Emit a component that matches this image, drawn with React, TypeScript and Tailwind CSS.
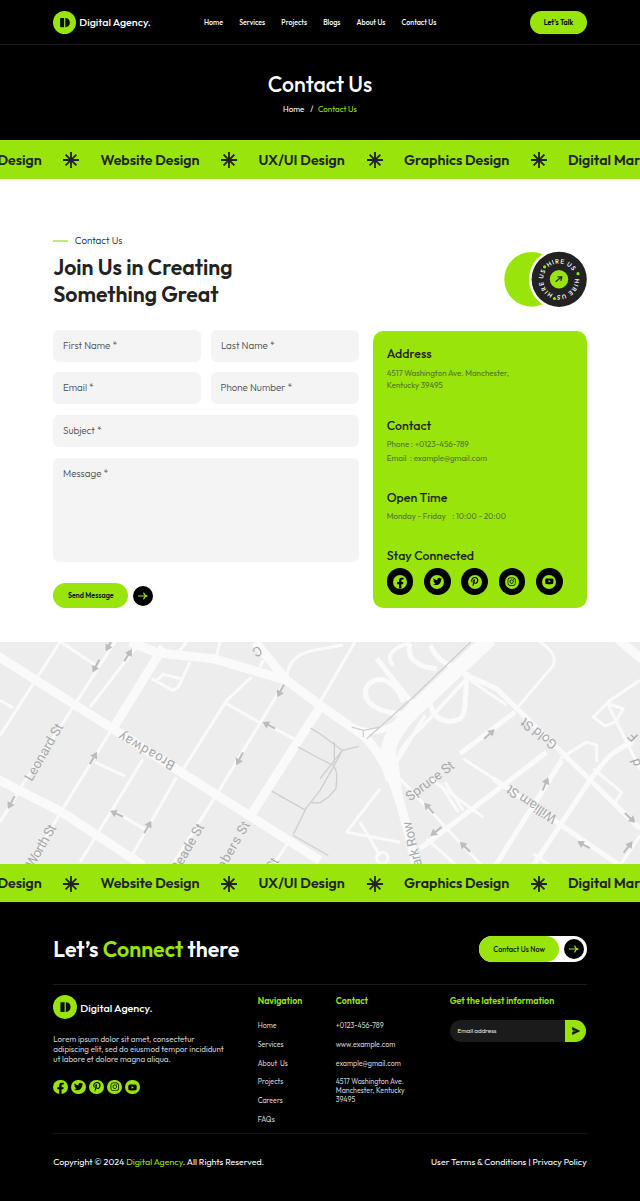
import type { ReactNode } from "react";
import { FaFacebookF, FaInstagram, FaPinterestP, FaTwitter, FaYoutube } from "react-icons/fa";

const navLinks = ["Home", "Services", "Projects", "Blogs", "About Us", "Contact Us"];

const socials: { name: string; icon: ReactNode }[] = [
  { name: "Facebook", icon: <FaFacebookF className="h-[84%] w-[84%] translate-x-[4%] translate-y-[13%]" /> },
  { name: "Twitter", icon: <FaTwitter className="h-[64%] w-[64%]" /> },
  { name: "Pinterest", icon: <FaPinterestP className="h-[68%] w-[68%]" /> },
  { name: "Instagram", icon: <FaInstagram className="h-[66%] w-[66%]" /> },
  { name: "YouTube", icon: <FaYoutube className="h-[62%] w-[62%]" /> },
];

function Logo({ size, text }: { size: string; text: string }) {
  return (
    <div className="flex items-center">
      <svg viewBox="0 0 24 24" className={size}>
        <circle cx="12" cy="12" r="12" fill="#99e40a" />
        <path d="M8 7.2H11.6V16.9H8Q7.4 16.9 7.4 16.3V7.8Q7.4 7.2 8 7.2ZM12.8 7.2C15.8 7.2 17.6 9 17.6 12.05C17.6 15.1 15.8 16.9 12.8 16.9Z" fill="#0b0f02" />
      </svg>
      <span className={text}>Digital Agency.</span>
    </div>
  );
}

function Star() {
  return (
    <svg viewBox="-8 -8 16 16" className="h-4 w-4 shrink-0" stroke="#222" strokeWidth="1.8">
      <path d="M0-8V8M-8 0H8M-5.4-5.4L5.4 5.4M5.4-5.4L-5.4 5.4" />
    </svg>
  );
}

function Marquee({ className }: { className: string }) {
  return (
    <div className={`flex items-center overflow-hidden bg-[#99e40a] text-[14.2px] font-semibold whitespace-nowrap text-[#222] ${className}`}>
      <div className="-ml-[2.5px] flex shrink-0 items-center">
        <span className="w-[65.5px]">Design</span>
        <Star />
        <span className="ml-[21.5px] w-[120.5px]">Website Design</span>
        <Star />
        <span className="ml-[21.5px] w-[108px]">UX/UI Design</span>
        <Star />
        <span className="ml-[21.5px] w-[126.5px]">Graphics Design</span>
        <Star />
        <span className="ml-[21.5px]">Digital Marketing</span>
      </div>
    </div>
  );
}

function Arrow({ className }: { className: string }) {
  return (
    <span className={`flex h-5 w-5 items-center justify-center rounded-full bg-black ${className}`}>
      <svg viewBox="0 0 10 10" className="h-2.5 w-2.5" fill="none" stroke="#99e40a" strokeWidth="1.2">
        <path d="M0 5H9M5.6 1.6C6 3.5 7.2 4.8 9.6 5C7.2 5.2 6 6.5 5.6 8.4" />
      </svg>
    </span>
  );
}

function HireBadge() {
  return (
    <svg viewBox="504 250 84 60" className="h-[60px] w-[84px]">
      <defs>
        <path id="ring" d="M559 295.2A15.9 15.9 0 1 1 559.01 295.2" />
      </defs>
      <circle cx="531.7" cy="279.3" r="27.4" fill="#99e40a" />
      <circle cx="559" cy="279.3" r="30" fill="#fff" />
      <circle cx="559.2" cy="279.3" r="27.6" fill="#222" />
      <circle cx="559" cy="279.3" r="9.2" fill="#99e40a" />
      <g fill="#fff" fontSize="6.3" fontWeight="500" letterSpacing="0.8">
        <text transform="rotate(-43 559 279.3)">
          <textPath href="#ring" startOffset="49.95">HIRE US</textPath>
        </text>
        <text transform="rotate(86 559 279.3)">
          <textPath href="#ring" startOffset="49.95">HIRE US</textPath>
        </text>
        <text transform="rotate(201 559 279.3)">
          <textPath href="#ring" startOffset="49.95">HIRE US</textPath>
        </text>
      </g>
      <g fill="#99e40a">
        <circle cx="544.6" cy="266.8" r="1.6" />
        <circle cx="578" cy="273.7" r="1.6" />
        <circle cx="554.5" cy="298.5" r="1.6" />
      </g>
      <path d="M555.6 281.8L561.6 276.9M557.4 276.8H561.8L560.8 280.8" fill="none" stroke="#222" strokeWidth="1.2" />
    </svg>
  );
}

function MapArrow({ x, y, r }: { x: number; y: number; r: number }) {
  return (
    <g transform={`translate(${x} ${y}) rotate(${r})`}>
      <path d="M-21 0H6" stroke="#bcbcbc" strokeWidth="6" fill="none" />
      <path d="M2-12L22 0L2 12Z" fill="#bcbcbc" />
    </g>
  );
}

const arrows: [number, number, number][] = [
  [328, 28, 118], [288, 92, 118], [384, 60, -58], [34, 501, 118], [280, 368, -60],
  [350, 535, 205], [443, 575, -60], [842, 166, 118], [719, 370, 118], [807, 270, 208],
  [1468, 296, -42], [1287, 518, -132], [1308, 588, 142], [1395, 634, -136],
  [1636, 446, -66], [1751, 628, 208], [1890, 547, 42], [1884, 635, -52],
];

function CityMap() {
  return (
    <svg viewBox="0 20 1920 667" preserveAspectRatio="none" className="block h-[222.5px] w-full bg-[#ededed]">
      <g fill="none" stroke="#fafafa" strokeLinejoin="round">
        <g strokeWidth="9">
          <path d="M180 20L0 300M0 195L40 218M345 20L200 245L60 460M0 560L55 470M175 15L290 92M420 20L270 215M330 290L185 525L90 690M285 380L375 422M430 370L240 680M530 425L390 670M340 525L440 585" />
          <path d="M455 130L518 165L535 155L570 80M470 135L490 117L545 130M535 50L560 20M650 60L660 20M790 75L775 105M755 125L680 195L550 400M680 205L780 262M855 140L645 485L510 700M790 262L890 315M865 620L820 690" />
          <path d="M860 125C865 80 890 50 960 42L1030 28M960 200L1065 20M1390 120L1520 210M1620 20C1650 40 1670 60 1660 90L1545 225M1390 370L1490 435M1290 430L1450 545" />
          <path d="M1200 430L1445 690M1140 460L1040 590L1200 620M1080 560L1140 660M1280 610L1370 690M1320 445L1375 530M1335 440L1390 525M1920 135L1830 195L1780 245L1815 272L1845 260L1870 220L1825 205M1825 210L1920 400M1680 370L1760 320L1790 330L1790 380M1780 400L1865 470L1840 510M1600 655L1650 690M1860 690L1920 600" />
          <circle cx="1147" cy="667" r="17" />
        </g>
        <g strokeWidth="15">
          <path d="M1390 115L1490 160L1920 580M1545 230L1380 355M1640 350L1260 640M1685 375L1480 700M1900 320C1820 350 1800 400 1780 420L1600 690M1480 430L1860 690" />
          <path d="M1210 235C1140 235 1080 200 1100 155C1120 120 1180 120 1210 200M1290 190C1290 250 1340 270 1380 250C1400 235 1395 180 1400 110M1230 25C1220 60 1240 95 1310 100M1130 70L1250 220M1290 30C1310 70 1340 90 1370 95" />
          <path d="M1275 240L1190 380L1210 550M1400 130L1270 270C1180 350 1180 380 1200 470M1180 90C1150 60 1190 30 1230 25" strokeWidth="11" />
        </g>
        <path d="M-10 60L330 275L960 675M-10 430L185 530L430 690M490 35L345 270M960 215L755 535" strokeWidth="27" />
        <path d="M390 20L470 52L640 70L860 135L960 210L1090 300C1180 390 1210 520 1250 700M765 20L860 135M1840 0L1930 75" strokeWidth="27" />
        <path d="M1470 10L1235 230C1160 310 1150 350 1180 430" strokeWidth="46" />
        <path d="M1050 270C1120 305 1160 285 1220 245" strokeWidth="18" />
      </g>
      <g fill="none" stroke="#cfcfcf" strokeWidth="4">
        <path d="M1412 20L1240 185L1140 275L1100 310M1055 275L1090 285L1140 275M1090 285V305M1076 333L1027 345L960 295M932 278L960 295M1027 345L960 430M1027 345L1000 395L960 465M895 335L960 370L1000 390C1015 410 1010 430 1008 460L985 485L960 502H935M1003 320V385M815 467L915 523L960 465M920 515L880 597M880 600L985 660" />
      </g>
      {arrows.map(([x, y, r]) => (
        <MapArrow key={`${x}-${y}`} x={x} y={y} r={r} />
      ))}
      <g fill="#a8a8a8" className="font-[Roboto]" fontSize="40">
        <text transform="translate(95 440) rotate(-60)" textLength="192">Leonard St</text>
        <text transform="translate(100 698) rotate(-60)" textLength="140">Worth St</text>
        <text transform="translate(528 382) rotate(210)" textLength="188">Broadway</text>
        <text transform="translate(534 712) rotate(-60)" textLength="160">Reade St</text>
        <text transform="translate(628 780) rotate(-60)" textLength="246">Chambers St</text>
        <text transform="translate(806 732) rotate(-60)" textLength="64">k St</text>
        <text transform="translate(776 30) rotate(150)">C</text>
        <text transform="translate(1230 498) rotate(-37)" textLength="170">Spruce St</text>
        <text transform="translate(1674 323) rotate(218)" textLength="126">Gold St</text>
        <text transform="translate(1673 544) rotate(214)" textLength="172">William St</text>
        <text transform="translate(1272 713) rotate(-104)" textLength="162">Park Row</text>
        <text transform="translate(1916 302) rotate(225)">F</text>
        <text transform="translate(1924 388) rotate(-108)">d</text>
      </g>
    </svg>
  );
}

function Field({ label, className }: { label: string; className: string }) {
  return (
    <label className={`flex rounded-[6px] bg-[#f4f4f4] pl-[9.7px] text-[9.8px] leading-8 font-light text-[#4a4a4a] ${className}`}>
      {label}
    </label>
  );
}

export default function App() {
  return (
    <div className="h-[1201px] w-[640px] overflow-hidden bg-white font-[Outfit,Lato,sans-serif] whitespace-nowrap">
      <header className="flex h-[44.5px] items-center border-b border-[#1c1c1c] bg-black pt-[1.4px] pl-[53.3px] text-white">
        <Logo size="h-[23px] w-[23px]" text="ml-[3px] w-[124.7px] text-[10.7px] font-medium" />
        <nav className="flex w-[326px] gap-[16.2px] pt-[2px] text-[7.1px] font-medium">
          {navLinks.map((l) => (
            <a key={l}>{l}</a>
          ))}
        </nav>
        <button className="h-[22.5px] w-[57px] rounded-full bg-[#99e40a] pt-[2px] text-[7.1px] font-semibold text-black">Let’s Talk</button>
      </header>

      <section className="flex h-[95.5px] flex-col items-center bg-black text-white">
        <h1 className="mt-[26px] text-[21.3px] leading-[28px] font-medium">Contact Us</h1>
        <div className="mt-[5.5px] flex text-[8px] leading-[11px]">
          <span>Home</span>
          <span className="ml-[6px]">/</span>
          <span className="ml-[4.5px] text-[#99e40a]">Contact Us</span>
        </div>
      </section>

      <Marquee className="h-[38.7px] pt-[2px]" />

      <main className="h-[463px] px-[53.3px] pt-[54px]">
        <div className="flex h-[97px] justify-between">
          <div>
            <div className="flex h-4 items-center pt-px text-[9.8px] font-light text-[#222]">
              <span className="-mt-px mr-[7px] h-[2px] w-[14.5px] bg-[#bfe97a]" />
              Contact Us
            </div>
            <h2 className="mt-[6.6px] text-[21.3px] leading-[26.7px] font-semibold text-[#222]">
              Join Us in Creating
              <br />
              Something Great
            </h2>
          </div>
          <div className="-mr-[1.3px] pt-[17.3px]">
            <HireBadge />
          </div>
        </div>

        <div className="flex">
          <form className="w-[305.5px]">
            <div className="flex justify-between">
              <Field label="First Name *" className="h-8 w-[147.5px]" />
              <Field label="Last Name *" className="h-8 w-[147.5px]" />
            </div>
            <div className="mt-[10.7px] flex justify-between">
              <Field label="Email *" className="h-8 w-[147.5px]" />
              <Field label="Phone Number *" className="h-8 w-[148px]" />
            </div>
            <Field label="Subject *" className="mt-[10.7px] h-8" />
            <Field label="Message *" className="mt-[10.7px] h-[104.5px]" />
            <div className="mt-[21.2px] flex h-[25px] w-[104px] items-center rounded-full bg-[#fcfcfc]">
              <span className="flex h-[25px] w-[75px] items-center justify-center rounded-full bg-[#99e40a] pt-px text-[7.1px] font-semibold text-[#111]">
                Send Message
              </span>
              <Arrow className="ml-[4.5px]" />
            </div>
          </form>

          <aside className="mt-[1.5px] ml-[14px] h-[277px] w-[214px] rounded-[10.5px] bg-[#99e40a] pl-[14px] text-[8px] text-[#222]">
            <h3 className="pt-[14.8px] text-[12.4px] leading-4 font-medium">Address</h3>
            <p className="mt-[5px] leading-[12.4px] text-[#54702a]">
              4517 Washington Ave. Manchester,
              <br />
              Kentucky 39495
            </p>
            <h3 className="mt-[26px] text-[12.4px] leading-4 font-medium">Contact</h3>
            <p className="mt-[3px] leading-[14px] text-[#54702a]">
              Phone : +0123-456-789
              <br />
              <span className="whitespace-pre">Email  : example@gmail.com</span>
            </p>
            <h3 className="mt-[25.7px] text-[12.4px] leading-4 font-medium">Open Time</h3>
            <p className="mt-[3.5px] flex leading-[12.4px] text-[#54702a]">
              <span className="w-[65.5px]">Monday - Friday</span>
              <span>: 10:00 - 20:00</span>
            </p>
            <h3 className="mt-[25.5px] text-[12.4px] leading-4 font-medium">Stay Connected</h3>
            <div className="mt-[4.3px] flex gap-[10.6px]">
              {socials.map((s) => (
                <a key={s.name} aria-label={s.name} className="flex h-[26.7px] w-[26.7px] items-center justify-center rounded-full bg-black">
                  <span className="flex h-[14px] w-[14px] items-center justify-center overflow-hidden rounded-full bg-[#99e40a] text-black">{s.icon}</span>
                </a>
              ))}
            </div>
          </aside>
        </div>
      </main>

      <CityMap />
      <Marquee className="h-[38.3px] pt-px" />

      <footer className="h-[299px] bg-black px-[53.3px] pt-[34px] text-white">
        <div className="flex h-[48.5px] justify-between border-b border-[#1a1a1a]">
          <h2 className="text-[21.3px] leading-[28px] font-semibold">
            Let’s <span className="text-[#99e40a]">Connect</span> there
          </h2>
          <div className="flex h-[25.3px] w-[107.7px] items-center rounded-full bg-white">
            <span className="flex h-full w-[80.3px] items-center justify-center rounded-full bg-[#99e40a] pt-[2px] text-[7.25px] font-medium text-[#111]">Contact Us Now</span>
            <Arrow className="ml-[4.7px]" />
          </div>
        </div>

        <div className="flex h-[149.2px] border-b border-[#161616] pt-[10.5px]">
          <div className="w-[204.4px]">
            <Logo size="h-6 w-6" text="ml-[3px] pt-px text-[10.8px] font-medium" />
            <p className="mt-[14.3px] text-[8px] leading-[10.2px] text-[#cfcfcf]">
              Lorem ipsum dolor sit amet, consectetur
              <br />
              adipiscing elit, sed do eiusmod tempor incididunt
              <br />
              ut labore et dolore magna aliqua.
            </p>
            <div className="mt-[15.5px] flex gap-[3.6px]">
              {socials.map((s) => (
                <a key={s.name} aria-label={s.name} className="flex h-[14.4px] w-[14.4px] items-center justify-center overflow-hidden rounded-full bg-[#99e40a] text-black">{s.icon}</a>
              ))}
            </div>
          </div>
          <div className="w-[78px] text-[7.1px] text-[#d2d2d2]">
            <h4 className="mb-[9.8px] text-[8.9px] leading-3 font-semibold text-[#99e40a]">Navigation</h4>
            {["Home", "Services", "About  Us", "Projects", "Careers", "FAQs"].map((t) => (
              <a key={t} className="block h-[18.7px] leading-[18.7px] whitespace-pre">{t}</a>
            ))}
          </div>
          <div className="w-[114px] text-[7.1px] text-[#d2d2d2]">
            <h4 className="mb-[9.8px] text-[8.9px] leading-3 font-semibold text-[#99e40a]">Contact</h4>
            {["+0123-456-789", "www.example.com", "example@gmail.com"].map((t) => (
              <a key={t} className="block h-[18.7px] leading-[18.7px]">{t}</a>
            ))}
            <p className="mt-[4.9px] leading-[8.9px]">
              4517 Washington Ave.
              <br />
              Manchester, Kentucky
              <br />
              39495
            </p>
          </div>
          <div>
            <h4 className="text-[8.9px] leading-3 font-semibold text-[#99e40a]">Get the latest information</h4>
            <div className="mt-[13px] flex h-[21.4px] w-[136.3px] items-center overflow-hidden rounded-full bg-[#1b1b1b]">
              <span className="w-[115.4px] pt-px pl-[7.8px] text-[6.3px] text-[#e8e8e8]">Email address</span>
              <span className="flex h-full flex-1 items-center bg-[#99e40a] pl-[6.5px]">
                <svg viewBox="0 0 8 8" className="h-2 w-2">
                  <path d="M.3.3L7.9 4L.3 7.7V5.2L1.6 4.5H3.8V3.5H1.6L.3 2.8Z" fill="#111" stroke="#111" strokeWidth=".4" />
                </svg>
              </span>
            </div>
          </div>
        </div>

        <div className="flex justify-between pt-[22px] text-[8.9px] leading-3">
          <p>
            Copyright © 2024 <span className="text-[#99e40a]">Digital Agency</span>. All Rights Reserved.
          </p>
          <p>User Terms &amp; Conditions | Privacy Policy</p>
        </div>
      </footer>
    </div>
  );
}
